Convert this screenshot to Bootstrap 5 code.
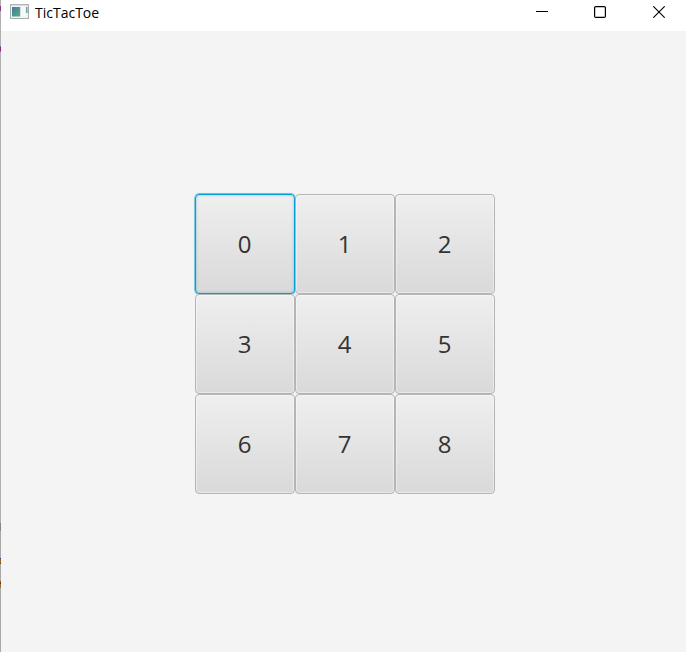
<!DOCTYPE html>
<html lang="en">
<head>
<meta charset="utf-8">
<meta name="viewport" content="width=device-width, initial-scale=1">
<title>TicTacToe</title>
<link href="https://cdn.jsdelivr.net/npm/bootstrap@5.3.0/dist/css/bootstrap.min.css" rel="stylesheet">
<style>
body { font-family: "Open Sans", "Noto Sans", sans-serif; background: #f4f4f4; }
/* One-pixel strip of whatever lies behind the window's left edge */
.window-edge {
  width: 1px;
  background: linear-gradient(#b0b0b0 0 6px, #7d3f80 6px 11px, #b0b0b0 11px 46px, #7477b0 46px 47px, #8b2a70 47px 51px, #7477b0 51px 52px, #b0b0b0 52px 523px, #858585 523px 531px, #a8a8a8 531px 558px, #304878 558px 559px, #a06020 559px 563px, #304878 563px 564px, #a8a8a8 564px 581px, #8a5526 581px 583px, #334 583px 584px, #a86a30 584px 588px, #a8a8a8 588px);
}
.title-bar { height: 31px; padding-left: 9px; }
.title-text { font-size: 14px; line-height: 20px; margin: 3px 0 0 5px; color: #000; letter-spacing: 0; }
.app-icon { margin-top: 3px; }
.win-buttons { gap: 46px; margin: 6px 21px 0 0; }
.close-glyph { margin-left: 1px; }
.board { grid-template-columns: repeat(3, 100px); grid-auto-rows: 100px; margin: 163px 0 0 194px; }
.cell {
  --bs-btn-padding-x: 0;
  --bs-btn-padding-y: 0;
  --bs-btn-color: #333;
  --bs-btn-border-color: #b5b5b5;
  --bs-btn-border-radius: 4px;
  --bs-btn-font-size: 24px;
  --bs-btn-hover-color: #333;
  --bs-btn-hover-border-color: #b5b5b5;
  padding-right: 1px;
  background: linear-gradient(#efefef, #d9d9d9);
  box-shadow: inset 0 0 0 1px rgba(255, 255, 255, .4);
}
.cell.focused {
  --bs-btn-border-color: #039ed3;
  border-width: 1.4px;
  box-shadow: 0 0 0 .4px #039ed3, 0 0 2px #039ed388, inset 0 0 3px #039ed377;
}
</style>
<script src="https://cdn.jsdelivr.net/npm/bootstrap@5.3.0/dist/js/bootstrap.bundle.min.js"></script>
</head>
<body class="vh-100 overflow-hidden d-flex">
<div class="window-edge flex-shrink-0"></div>
<div class="flex-grow-1">
  <header class="title-bar bg-white d-flex align-items-start">
    <svg class="app-icon" width="20" height="17" viewBox="0 0 20 17" aria-hidden="true">
      <defs><linearGradient id="pane" x2="1" y2="1"><stop stop-color="#4679a0"/><stop offset="1" stop-color="#55b080"/></linearGradient></defs>
      <rect x=".5" y="1.5" width="18" height="14" fill="#f4f4f4" stroke="#a7acb3"/>
      <path d="M0 2h19" stroke="#b9c0c8"/>
      <rect x="2" y="4" width="8.5" height="9.5" fill="url(#pane)"/>
      <path d="M11 4v10M14 4v10" stroke="#fff"/>
      <path d="M16.8 4v6" stroke="#5a9c9c" stroke-width="1.4"/>
    </svg>
    <span class="title-text">TicTacToe</span>
    <div class="win-buttons d-flex ms-auto" aria-hidden="true">
      <svg width="12" height="12"><path d="M0 5.5h12" stroke="#000"/></svg>
      <svg width="12" height="12"><rect x=".6" y=".6" width="10.8" height="10.8" rx="1.2" fill="none" stroke="#000" stroke-width="1.2"/></svg>
      <svg class="close-glyph" width="12" height="12"><path d="M.3.3l11.4 11.4M11.7.3L.3 11.7" stroke="#000" stroke-width="1.1"/></svg>
    </div>
  </header>
  <main class="board d-grid">
    <button class="btn cell focused" type="button">0</button>
    <button class="btn cell" type="button">1</button>
    <button class="btn cell" type="button">2</button>
    <button class="btn cell" type="button">3</button>
    <button class="btn cell" type="button">4</button>
    <button class="btn cell" type="button">5</button>
    <button class="btn cell" type="button">6</button>
    <button class="btn cell" type="button">7</button>
    <button class="btn cell" type="button">8</button>
  </main>
</div>
</body>
</html>
